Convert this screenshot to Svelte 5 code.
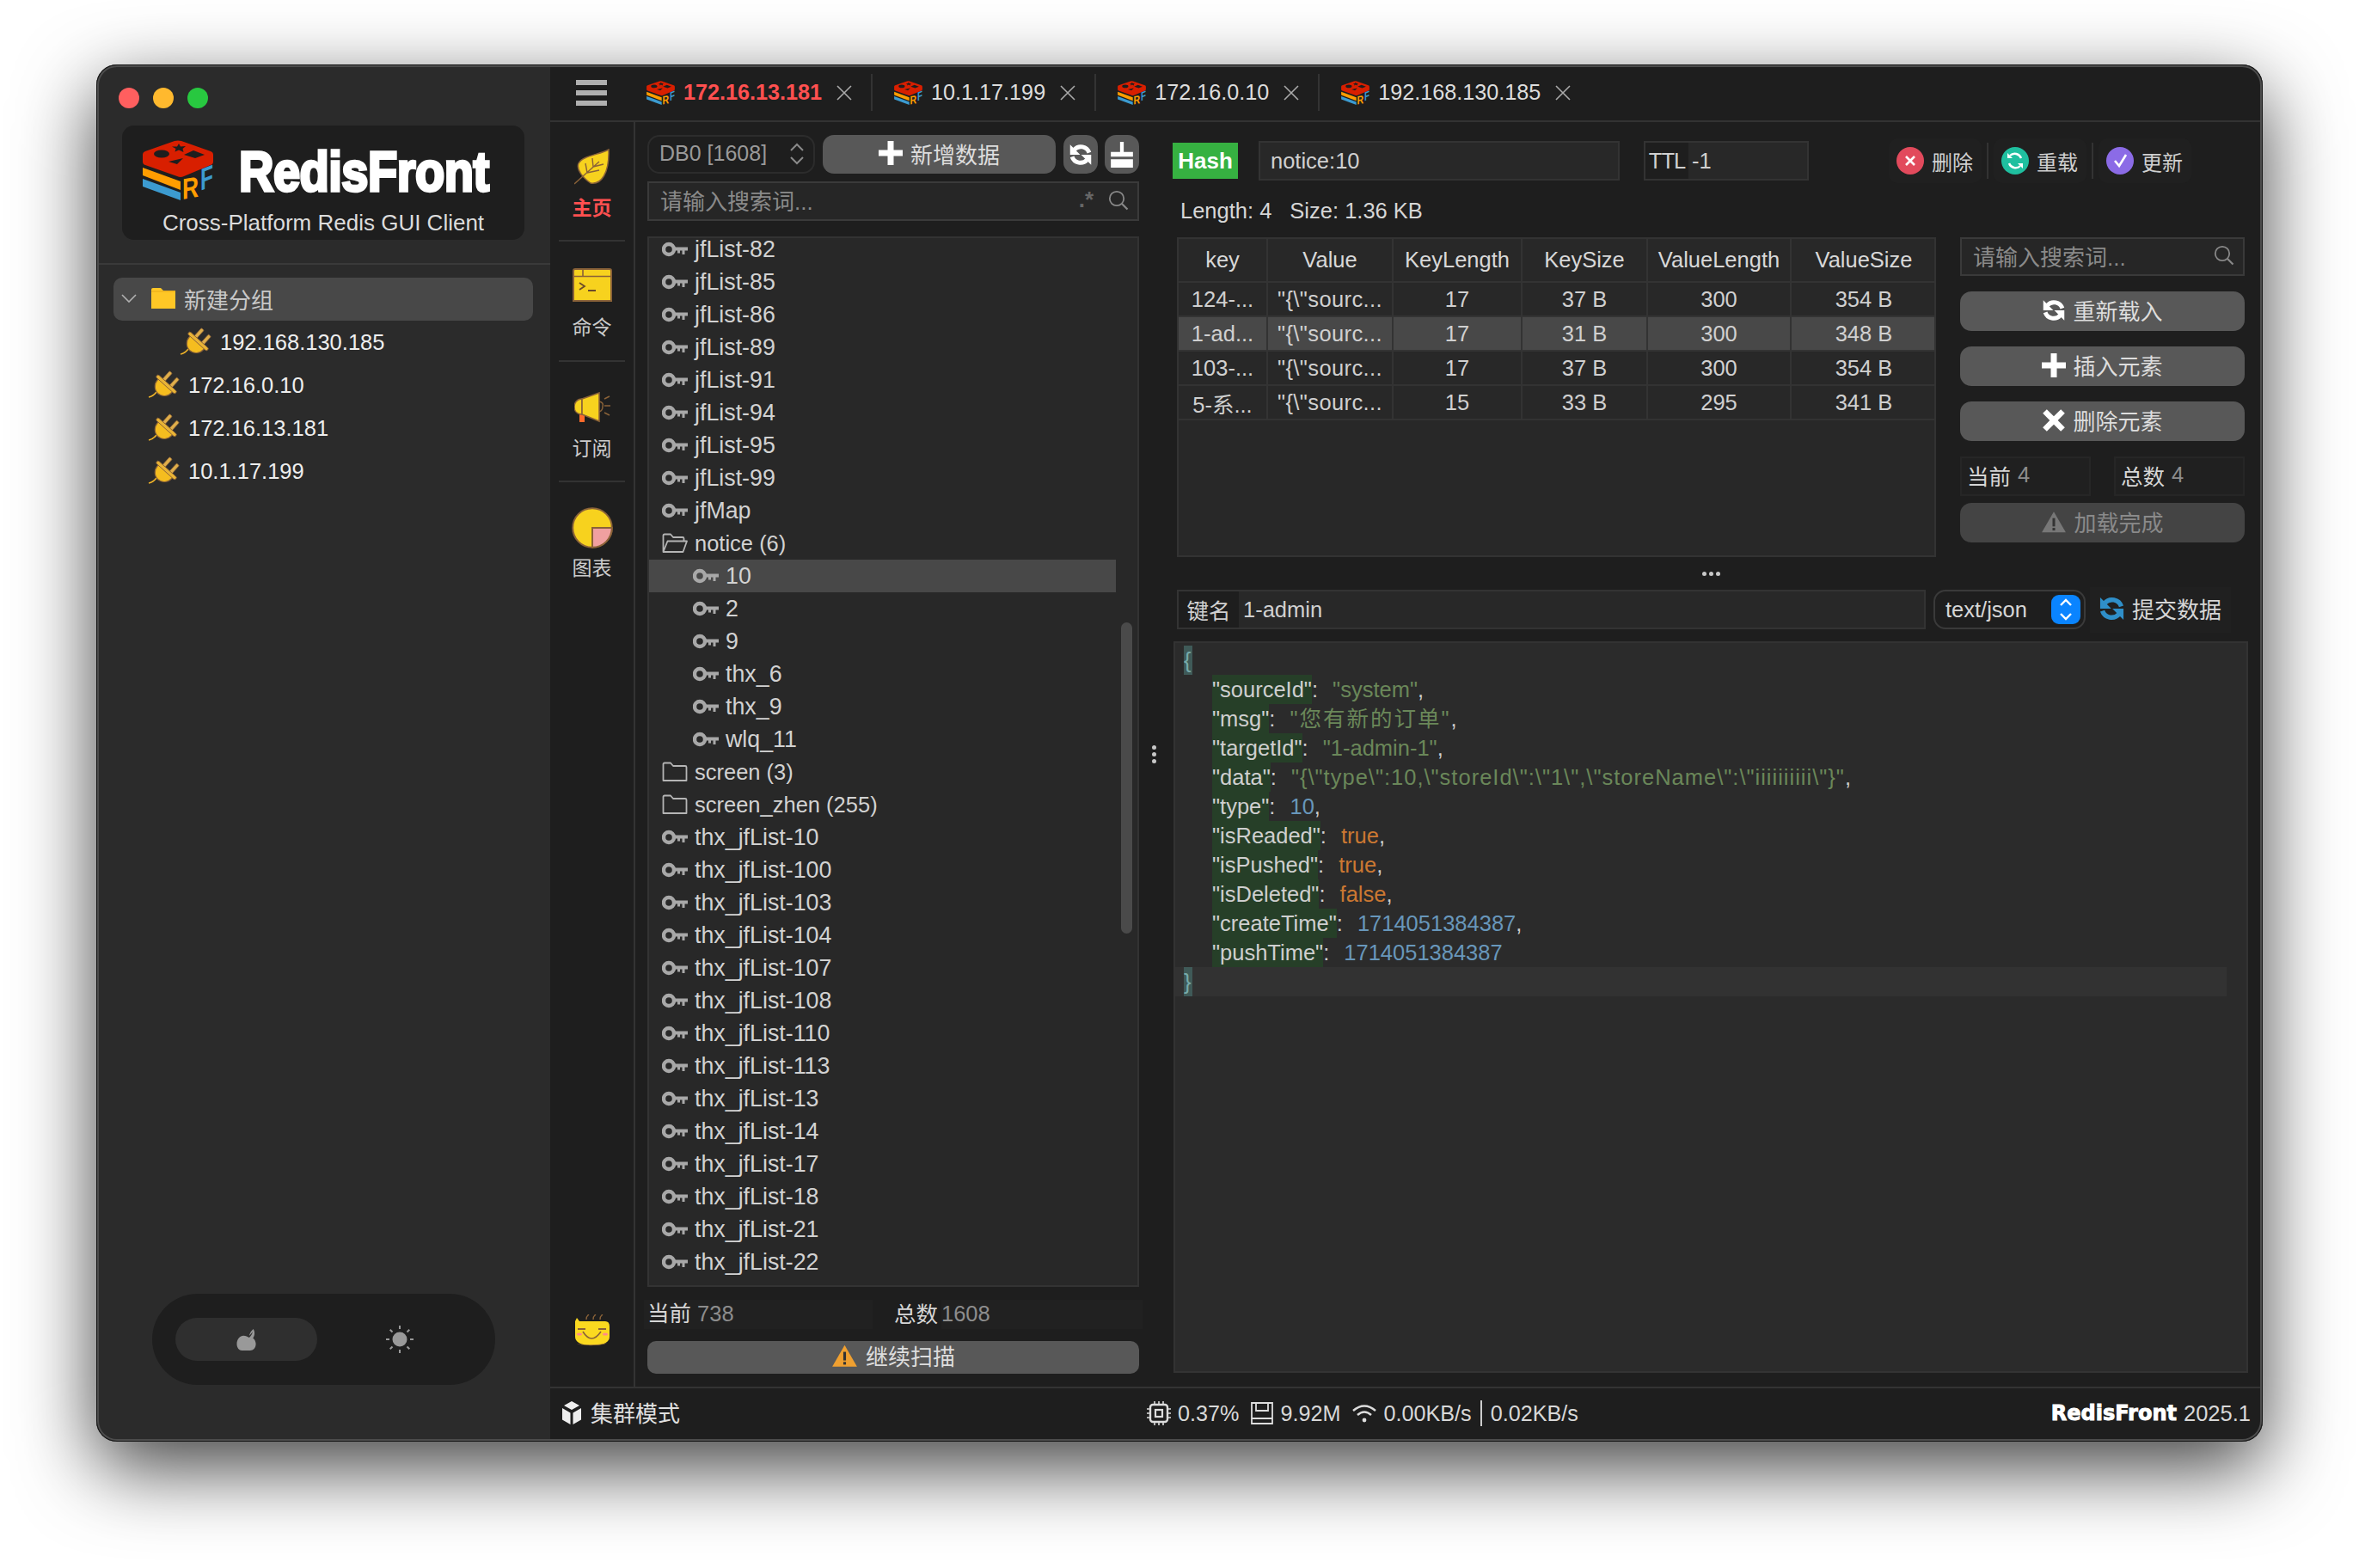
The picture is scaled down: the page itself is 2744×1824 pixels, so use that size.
<script>
  const tabs = [
    { name: '172.16.13.181', active: true },
    { name: '10.1.17.199' },
    { name: '172.16.0.10' },
    { name: '192.168.130.185' }
  ]
  const hosts = ['172.16.0.10', '172.16.13.181', '10.1.17.199']

  const keys = n => n.map(name => ({ name, kind: 'key' }))
  const sub = n => n.map(name => ({ name, kind: 'key', sub: true }))
  const tree = [
    ...keys(['jfList-82', 'jfList-85', 'jfList-86', 'jfList-89', 'jfList-91', 'jfList-94', 'jfList-95', 'jfList-99', 'jfMap']),
    { name: 'notice (6)', kind: 'open' },
    { name: '10', kind: 'key', sub: true, sel: true },
    ...sub(['2', '9', 'thx_6', 'thx_9', 'wlq_11']),
    { name: 'screen (3)', kind: 'closed' },
    { name: 'screen_zhen (255)', kind: 'closed' },
    ...keys(['thx_jfList-10', 'thx_jfList-100', 'thx_jfList-103', 'thx_jfList-104', 'thx_jfList-107', 'thx_jfList-108', 'thx_jfList-110', 'thx_jfList-113', 'thx_jfList-13', 'thx_jfList-14', 'thx_jfList-17', 'thx_jfList-18', 'thx_jfList-21', 'thx_jfList-22'])
  ]

  const cols = ['key', 'Value', 'KeyLength', 'KeySize', 'ValueLength', 'ValueSize']
  const rows = [
    ['124-...', '"{\\"sourc...', '17', '37 B', '300', '354 B'],
    ['1-ad...', '"{\\"sourc...', '17', '31 B', '300', '348 B', true],
    ['103-...', '"{\\"sourc...', '17', '37 B', '300', '354 B'],
    ['5-系...', '"{\\"sourc...', '15', '33 B', '295', '341 B']
  ]

  const json = [
    ['sourceId', 'str', '"system"', ','],
    ['msg', 'str wide', '"您有新的订单"', ','],
    ['targetId', 'str', '"1-admin-1"', ','],
    ['data', 'str wider', '"{\\"type\\":10,\\"storeId\\":\\"1\\",\\"storeName\\":\\"iiiiiiiiii\\"}"', ','],
    ['type', 'num', '10', ','],
    ['isReaded', 'bool', 'true', ','],
    ['isPushed', 'bool', 'true', ','],
    ['isDeleted', 'bool', 'false', ','],
    ['createTime', 'num', '1714051384387', ','],
    ['pushTime', 'num', '1714051384387', '']
  ]
</script>

{#snippet logo(cls)}
  <svg class={cls} viewBox="0 0 82 70">
    <path d="M37 1 Q41 0 45 1 L79 13 Q82 14 82 17 V25 Q82 28 79 29 L48 42 Q44 44 40 42 L3 29 Q0 28 0 25 V17 Q0 14 3 13 Z" fill="#d81f00"/>
    <ellipse cx="22" cy="16" rx="9" ry="4.5" fill="#1e1e1e"/>
    <path d="M42 4 L44 7.5 L50 7 L46.5 10 L47.5 14 L42 11.5 L37.5 13.5 L38.5 10 L34 7.5 L40 7.5 Z" fill="#1e1e1e"/>
    <path d="M59 12 L72 17 L61 21 L48 17 Z" fill="#1e1e1e"/>
    <path d="M47 21 L40 28 L30 25 Z" fill="#1e1e1e"/>
    <path d="M0 32 L44 48 V58 L0 41 Z" fill="#ff9d00"/>
    <path d="M0 45 L44 61 V70 L0 54 Z" fill="#3c9bd0"/>
    <text transform="translate(46 69) skewY(-10) scale(.78 1)" class="rf r">R</text>
    <text transform="translate(67 59) skewY(-22) scale(.72 1.05)" class="rf f">F</text>
  </svg>
{/snippet}

{#snippet plug()}
  <svg class="plug" viewBox="0 0 36 36">
    <path d="M-1 32 Q4 31 8 26" fill="none" stroke="#f0b429" stroke-width="1.6"/>
    <g transform="translate(19.5 17) rotate(42)">
      <rect x="-7.5" y="-14" width="4" height="13" rx="1" fill="#dfae4a" stroke="#8a6238" stroke-width=".8"/>
      <rect x="3.5" y="-14" width="4" height="13" rx="1" fill="#dfae4a" stroke="#8a6238" stroke-width=".8"/>
      <path d="M-11 1 H11 V3 A11 11.5 0 0 1 -11 3 Z" fill="#f5bd1f" stroke="#8a6238" stroke-width="1.2"/>
      <rect x="-15" y="-2" width="30" height="4" rx="2" fill="#e9b436" stroke="#8a6238" stroke-width=".9"/>
    </g>
  </svg>
{/snippet}

{#snippet key()}
  <svg class="tico" viewBox="0 0 30 18">
    <circle cx="8" cy="9" r="6" fill="none" stroke="#a8a8a8" stroke-width="4.4"/>
    <path d="M13 6.5 H30 V10.5 H26.5 V15 H23.5 V10.5 H21 V13.5 H18 V10.5 H13 Z" fill="#a8a8a8"/>
  </svg>
{/snippet}

{#snippet folder(open)}
  <svg class="tico folder" viewBox="0 0 30 24">
    {#if open}
      <path d="M1.5 22 V3 Q1.5 1.5 3 1.5 H10 L13 5 H24 Q25.5 5 25.5 6.5 V9 M1.5 22 L6.5 9.5 H29 L24.5 22 Z" fill="none" stroke="#b5b5b5" stroke-width="1.8" stroke-linejoin="round"/>
    {:else}
      <path d="M1.5 22 V3 Q1.5 1.5 3 1.5 H10 L13 5 H27 Q28.5 5 28.5 6.5 V22 Z" fill="none" stroke="#b5b5b5" stroke-width="1.8" stroke-linejoin="round"/>
    {/if}
  </svg>
{/snippet}

{#snippet sync(cls)}
  <svg class={cls} viewBox="0 0 24 24">
    <path d="M20.5 10 A8.8 8.8 0 0 0 5.6 7" fill="none" stroke="currentColor" stroke-width="4.2"/>
    <path d="M1.5 2 V12 H11.5 Z" fill="currentColor"/>
    <path d="M3.5 14 A8.8 8.8 0 0 0 18.4 17" fill="none" stroke="currentColor" stroke-width="4.2"/>
    <path d="M22.5 22 V12 H12.5 Z" fill="currentColor"/>
  </svg>
{/snippet}

{#snippet plus()}
  <svg class="bico" viewBox="0 0 24 24"><path d="M9 0 H15 V9 H24 V15 H15 V24 H9 V15 H0 V9 H9 Z" fill="currentColor"/></svg>
{/snippet}

{#snippet warn(cls)}
  <svg class={cls} viewBox="0 0 28 24">
    <path d="M14 1 L27 23.5 H1 Z" fill="currentColor"/>
    <rect x="12.6" y="8" width="2.8" height="9" fill="#333"/>
    <rect x="12.6" y="18.6" width="2.8" height="2.8" fill="#333"/>
  </svg>
{/snippet}

{#snippet lens()}
  <svg class="lens" viewBox="0 0 24 24">
    <circle cx="10" cy="10" r="8.2" fill="none" stroke="currentColor" stroke-width="1.8"/>
    <path d="M16 16 L22.5 22.5" stroke="currentColor" stroke-width="2.2"/>
  </svg>
{/snippet}

<div class="page">
  <div class="window">
    <aside class="side">
      <div class="lights"><i class="red"></i><i class="yellow"></i><i class="green"></i></div>
      <div class="brand">
        <div class="brand-top">
          {@render logo('brand-ico')}
          <span class="brand-name">RedisFront</span>
        </div>
        <div class="brand-sub">Cross-Platform Redis GUI Client</div>
      </div>
      <div class="side-line"></div>
      <div class="group">
        <svg class="chev" viewBox="0 0 18 12"><path d="M1 2 L9 10 L17 2" fill="none" stroke="#b0b0b0" stroke-width="1.6"/></svg>
        <svg class="gfolder" viewBox="0 0 28 24"><path d="M0 2 Q0 0 2 0 H11 L14 3 H28 V24 H0 Z" fill="#ffc726"/><path d="M0 4 H28" stroke="#e8a818" stroke-width="1"/></svg>
        <span>新建分组</span>
      </div>
      <div class="host nested">{@render plug()}<span>192.168.130.185</span></div>
      {#each hosts as h}
        <div class="host">{@render plug()}<span>{h}</span></div>
      {/each}
      <div class="mode">
        <div class="mode-on">
          <svg class="apple" viewBox="0 0 24 26"><path d="M15 8 C16 4 18 2 20 0 C22 3 22 8 19.5 11 C22 13 23 16 23 18 C23 23 20 26 16 26 H6 C3 26 0 23 0 18 C0 12 4 8 8 8 C11 8 13 9 15 10.5 C17 8 19 6 19 3 C18 5 16 7 15 8 Z" fill="#999"/></svg>
        </div>
        <div class="mode-off">
          <svg class="sun" viewBox="0 0 34 34">
            <circle cx="17" cy="17" r="8.5" fill="#999"/>
            <path d="M17 1 V5 M17 29 V33 M1 17 H5 M29 17 H33 M5.7 5.7 L8.5 8.5 M25.5 25.5 L28.3 28.3 M5.7 28.3 L8.5 25.5 M25.5 8.5 L28.3 5.7" stroke="#999" stroke-width="2"/>
          </svg>
        </div>
      </div>
    </aside>

    <main class="main">
      <header class="tabs">
        <div class="burger"><i></i><i></i><i></i></div>
        {#each tabs as t}
          <div class="tab" class:active={t.active}>
            {@render logo('tab-ico')}
            <span class="tab-name">{t.name}</span>
            <svg class="tab-x" viewBox="0 0 18 18"><path d="M1 1 L17 17 M17 1 L1 17" stroke="#aaa" stroke-width="1.6"/></svg>
          </div>
        {/each}
      </header>

      <div class="body">
        <nav class="rail">
          <div class="rail-item on">
            <svg class="r-leaf" viewBox="0 0 42 42">
              <path d="M40 1 C29 7 10 8 5 17 C2 24 10 34 19 40 C31 42 41 29 40 1 Z" fill="#f7d21e" stroke="#8a6238" stroke-width="1.5"/>
              <path d="M0 41 L29 15 M15 28 L13 17 M22 21 L21 11 M15 28 L29 25 M22 21 L34 18" fill="none" stroke="#8a6238" stroke-width="1.4"/>
            </svg>
            <span>主页</span>
          </div>
          <div class="rail-item">
            <svg class="r-term" viewBox="0 0 46 39">
              <path d="M1 38 V3 Q1 1 3 1 H43 Q45 1 45 3 V38 Z" fill="#f7d21e" stroke="#8a6238" stroke-width="2"/>
              <path d="M1 9.5 H45 M12 1 V9.5" stroke="#8a6238" stroke-width="1.6"/>
              <path d="M8 17 L14 21 L8 25 M18 26 H27" fill="none" stroke="#6b4a2a" stroke-width="1.8"/>
            </svg>
            <span>命令</span>
          </div>
          <div class="rail-item">
            <svg class="r-horn" viewBox="0 0 42 36">
              <path d="M6 24 H12 L12 35 H6 Z" fill="#ff6a2b"/>
              <path d="M9 8 C3 8 0 13 0 17 C0 22 3 26 9 26 Z" fill="#f7d21e" stroke="#8a6238" stroke-width="1.4"/>
              <path d="M9 8 L29 1 V34 L9 26 Z" fill="#f7d21e" stroke="#8a6238" stroke-width="1.6"/>
              <path d="M29 11 C33 12 34 14 33 17 C33 20 32 22 29 23 M35 8 L41 5 M35 16 H42 M35 24 L41 27" fill="none" stroke="#8a6238" stroke-width="1.5"/>
            </svg>
            <span>订阅</span>
          </div>
          <div class="rail-item">
            <svg class="r-pie" viewBox="0 0 48 48">
              <circle cx="24" cy="24" r="22.8" fill="#f7d21e" stroke="#8a6238" stroke-width="2"/>
              <path d="M24 24 H46.8 A22.8 22.8 0 0 1 24 46.8 Z" fill="#f0a0a0" stroke="#8a6238" stroke-width="2"/>
            </svg>
            <span>图表</span>
          </div>
          <svg class="r-face" viewBox="0 0 41 37">
            <path d="M1 8 L3 4 L6 8 H36 Q41 8 41 14 V26 C41 32 35 36 21 36 C7 36 1 32 1 26 Z" fill="#fbd920"/>
            <path d="M3 34 C8 36 32 36 38 33 C34 37 8 37 3 34 Z" fill="#8a6238"/>
            <path d="M14 6 Q14 2 17 0 M22 6 Q22 2 25 0 M30 6 Q30 2 33 0" fill="none" stroke="#8a6238" stroke-width="1.4"/>
            <path d="M4 17 H13 M28 17 H37" stroke="#8a6238" stroke-width="1.8"/>
            <path d="M10 20 Q20 36 31 20" fill="none" stroke="#8a6238" stroke-width="1.6"/>
            <ellipse cx="6" cy="23" rx="3" ry="1.5" fill="#ff8a8a"/><ellipse cx="36" cy="23" rx="3" ry="1.5" fill="#ff8a8a"/>
          </svg>
        </nav>

        <section class="keys">
          <div class="db-row">
            <div class="db">DB0 [1608]
              <svg class="updown" viewBox="0 0 18 26"><path d="M2 9 L9 2 L16 9 M2 17 L9 24 L16 17" fill="none" stroke="#8a8a8a" stroke-width="2"/></svg>
            </div>
            <button class="btn add">{@render plus()}新增数据</button>
            <button class="btn sq">{@render sync('bico big')}</button>
            <button class="btn sq">
              <svg class="bico big" viewBox="0 0 24 28"><path d="M10 0 H14 V11 H24 V16 H0 V11 H10 Z M0 19 H24 V28 H0 Z" fill="currentColor"/></svg>
            </button>
          </div>
          <div class="search">
            <span class="ph">请输入搜索词...</span>
            <span class="regex">.*</span>
            {@render lens()}
          </div>
          <div class="tree">
            <div class="tree-rows">
              {#each tree as n}
                <div class="node" class:sub={n.sub} class:sel={n.sel} class:dir={n.kind !== 'key'}>
                  {#if n.kind === 'key'}{@render key()}{:else}{@render folder(n.kind === 'open')}{/if}
                  <span>{n.name}</span>
                </div>
              {/each}
            </div>
            <div class="thumb"></div>
          </div>
          <div class="count">
            <div class="cnt-a">当前 <em>738</em></div>
            <div class="cnt-l">总数</div>
            <div class="cnt-b"><em>1608</em></div>
          </div>
          <button class="btn scan">{@render warn('warn')}继续扫描</button>
        </section>

        <div class="vsplit"><i></i><i></i><i></i></div>

        <section class="detail">
          <div class="toolbar">
            <span class="hash">Hash</span>
            <div class="field name">notice:10</div>
            <div class="field ttl"><b>TTL</b><span>-1</span></div>
            <div class="actions">
              <div class="act">
                <svg class="cir" viewBox="0 0 32 32"><circle cx="16" cy="16" r="16" fill="#e24a5c"/><path d="M11 11 L21 21 M21 11 L11 21" stroke="#fff" stroke-width="2.6"/></svg>
                删除
              </div>
              <i class="act-sep"></i>
              <div class="act">
                <svg class="cir" viewBox="0 0 32 32"><circle cx="16" cy="16" r="16" fill="#1fbf9f"/><path d="M23 13 A8 8 0 0 0 10 10 M9 19 A8 8 0 0 0 22 22" fill="none" stroke="#fff" stroke-width="2.4"/><path d="M7 7 V13 H13 Z M25 25 V19 H19 Z" fill="#fff"/></svg>
                重载
              </div>
              <i class="act-sep"></i>
              <div class="act">
                <svg class="cir" viewBox="0 0 32 32"><circle cx="16" cy="16" r="16" fill="#8b6be6"/><path d="M10 16 L15 22 L23 9" fill="none" stroke="#fff" stroke-width="2.6"/></svg>
                更新
              </div>
            </div>
          </div>

          <div class="meta"><span>Length: 4</span><span>Size: 1.36 KB</span></div>

          <div class="upper">
            <div class="tbl">
              <table>
                <thead><tr>{#each cols as c}<th>{c}</th>{/each}</tr></thead>
                <tbody>
                  {#each rows as r}
                    <tr class:cur={r[6]}>{#each r.slice(0, 6) as v}<td>{v}</td>{/each}</tr>
                  {/each}
                </tbody>
              </table>
            </div>
            <div class="ops">
              <div class="search small"><span class="ph">请输入搜索词...</span>{@render lens()}</div>
              <button class="btn op">{@render sync('bico')}重新载入</button>
              <button class="btn op">{@render plus()}插入元素</button>
              <button class="btn op">
                <svg class="bico" viewBox="0 0 24 24"><path d="M1 5 L5 1 L12 8 L19 1 L23 5 L16 12 L23 19 L19 23 L12 16 L5 23 L1 19 L8 12 Z" fill="currentColor"/></svg>
                删除元素
              </button>
              <div class="op-count">
                <div>当前 <em>4</em></div>
                <div>总数 <em>4</em></div>
              </div>
              <button class="btn op off">{@render warn('bico warn-off')}加载完成</button>
            </div>
          </div>

          <div class="hsplit"><i></i><i></i><i></i></div>

          <div class="keyrow">
            <div class="field kname"><b>键名</b><span>1-admin</span></div>
            <div class="ctype">text/json
              <span class="stepper"><svg viewBox="0 0 18 30"><path d="M3 10 L9 4 L15 10 M3 20 L9 26 L15 20" fill="none" stroke="#fff" stroke-width="2.4"/></svg></span>
            </div>
            <div class="submit">{@render sync('sub-ico')}提交数据</div>
          </div>

          <div class="editor">
            <div class="ln"><span class="br">{'{'}</span></div>
            {#each json as [k, type, v, tail]}
              <div class="ln prop"><span class="k">"{k}"</span>: <span class={type}>{v}</span>{tail}</div>
            {/each}
            <div class="ln now"><span class="br">{'}'}</span></div>
          </div>
        </section>
      </div>

      <footer class="status">
        <svg class="st-cube" viewBox="0 0 24 28"><path d="M12 0 L21 5 L12 10 L3 5 Z M1 8 L10.5 13.5 V27 L1 21.5 Z M23 8 L13.5 13.5 V27 L23 21.5 Z" fill="#eee"/></svg>
        <span class="st-mode">集群模式</span>
        <div class="stats">
          <svg class="st-ico" viewBox="0 0 28 28"><rect x="4" y="4" width="20" height="20" rx="3" fill="none" stroke="#ddd" stroke-width="2.4"/><rect x="10" y="10" width="8" height="8" fill="none" stroke="#ddd" stroke-width="2.2"/><path d="M9 0 V4 M14 0 V4 M19 0 V4 M9 24 V28 M14 24 V28 M19 24 V28 M0 9 H4 M0 14 H4 M0 19 H4 M24 9 H28 M24 14 H28 M24 19 H28" stroke="#ddd" stroke-width="1.6"/></svg>
          <span>0.37%</span>
          <svg class="st-ico disk" viewBox="0 0 26 26"><path d="M1 1 H25 V25 H1 Z M1 19 H25 M6 1 V10 H20 V1" fill="none" stroke="#ddd" stroke-width="1.8"/></svg>
          <span>9.92M</span>
          <svg class="st-ico wifi" viewBox="0 0 28 22"><path d="M1 8 Q14 -3 27 8 M6 13 Q14 6 22 13" fill="none" stroke="#ddd" stroke-width="2.4"/><circle cx="14" cy="19" r="2.4" fill="#ddd"/></svg>
          <span>0.00KB/s</span>
          <i class="st-sep"></i>
          <span>0.02KB/s</span>
        </div>
        <div class="ver"><b>RedisFront</b><span>2025.1</span></div>
      </footer>
    </main>
  </div>
</div>

<style>
  :global(body) { margin:0;background:#fff; }
  .page { width:2744px;height:1824px;box-sizing:border-box;padding:75px 112px 147px;overflow:hidden;font-family:"Liberation Sans","Noto Sans CJK SC",sans-serif;font-size:25.5px;color:#d6d6d6;background:#fff; }
  .window { position:relative;height:100%;display:flex;border-radius:24px;overflow:hidden;background:#2b2b2b;box-shadow:0 30px 90px rgba(0,0,0,.75); }
  .window::after { content:'';position:absolute;inset:0;border-radius:24px;pointer-events:none;box-shadow:inset 0 0 0 1px #141414,inset 0 0 0 3px #4c4c4c; }
  em { font-style:normal;color:#8d8d8d; }

  .side { width:528px;flex:none;display:flex;flex-direction:column;background:#2b2b2b; }
  .lights { display:flex;gap:16px;margin:27px 0 20px 26px; }
  .lights i { width:24px;height:24px;border-radius:50%; }
  .red { background:#ff5f5f; } .yellow { background:#ffb92e; } .green { background:#28c840; }
  .brand { width:468px;height:133px;box-sizing:border-box;margin-left:30px;padding:17px 0 0 24px;background:#1e1e1e;border-radius:14px; }
  .brand-top { display:flex;align-items:center;height:70px; }
  .brand-ico, .tab-ico { overflow:visible; }
  .brand-ico { width:82px;height:70px;flex:none; }
  .rf { font:bold 34px "Liberation Sans",sans-serif; }
  .rf.r { fill:#ff9d00; }
  .rf.f { fill:#3c9bd0; }
  .brand-name { display:inline-block;margin:3px 0 0 30px;font:bold 56px "Liberation Sans",sans-serif;color:#fff;-webkit-text-stroke:3px #fff;letter-spacing:-.5px;line-height:70px;transform:scaleY(1.15); }
  .brand-sub { margin:8px 0 0 -24px;text-align:center;font-size:26px;color:#dcdcdc;line-height:36px; }
  .side-line { height:2px;margin-top:27px;background:#3a3a3a; }
  .group { display:flex;align-items:center;width:488px;height:50px;margin:15px 0 0 20px;padding-bottom:2px;box-sizing:border-box;background:#484848;border-radius:10px;color:#c8c8c8;font-size:26px; }
  .chev { width:18px;height:12px;margin-left:9px; }
  .gfolder { width:28px;height:24px;margin:0 10px 0 17px; }
  .host { display:flex;align-items:center;height:50px;padding-left:62px;color:#eee; }
  .host.nested { padding-left:99px; }
  .plug { width:36px;height:36px;margin-right:9px;flex:none;overflow:visible; }
  .mode { display:flex;align-items:center;box-sizing:border-box;width:399px;height:106px;margin:auto 0 66px 65px;padding-left:27px;background:#1e1e1e;border-radius:53px; }
  .mode-on { display:flex;align-items:center;justify-content:center;width:165px;height:50px;background:#2f2f2f;border-radius:25px; }
  .apple { width:30px;height:25px; }
  .mode-off { display:flex;justify-content:center;width:192px; }
  .sun { width:34px;height:34px; }

  .main { flex:1;min-width:0;display:flex;flex-direction:column;background:#1e1e1e; }
  .tabs { display:flex;align-items:center;height:65px;flex:none;box-sizing:content-box;border-bottom:2px solid #333; }
  .burger { display:flex;flex-direction:column;justify-content:space-between;width:36px;height:30px;margin:0 21px 0 30px; }
  .burger i { height:6px;background:#b0b0b0; }
  .tab { display:flex;align-items:center;height:43px;padding:0 22px 0 25px;border-right:2px solid #333; }
  .tab:last-child { border-right:none; }
  .tab-ico { width:33px;height:28px;flex:none;margin-right:10px; }
  .tab-name { font-size:25.2px;color:#ddd; }
  .tab.active .tab-name { color:#ff5050;font-weight:bold; }
  .tab-x { width:18px;height:18px;margin-left:17px; }

  .body { flex:1;min-height:0;display:flex; }
  .rail { width:97px;flex:none;display:flex;flex-direction:column;box-sizing:content-box;border-right:2px solid #333; }
  .rail-item { display:flex;flex-direction:column;align-items:center;height:140px;margin:0 10px;box-sizing:border-box;border-bottom:2px solid #333;color:#ccc;font-size:23px;line-height:26px; }
  .rail-item:first-child { height:139px; }
  .rail-item:nth-child(4) { border-bottom:none; }
  .rail-item span { margin-top:17px; }
  .rail-item.on span { color:#ff5050;font-weight:bold;margin-top:14px; }
  .r-leaf { width:42px;height:42px;margin-top:31px; }
  .r-term { width:46px;height:39px;margin-top:31px; }
  .r-horn { width:42px;height:36px;margin-top:35px; }
  .r-pie { width:48px;height:48px;margin-top:29px; }
  .rail-item:nth-child(3) span { margin-top:17px; }
  .rail-item:nth-child(4) span { margin-top:10px; }
  .r-face { width:41px;height:37px;margin:auto 0 47px 28px; }

  .keys { width:572px;flex:none;display:flex;flex-direction:column;margin-left:14px;padding:15px 0 15px;box-sizing:border-box; }
  .db-row { display:flex;gap:9px;height:45px;flex:none; }
  .db { width:195px;flex:none;display:flex;align-items:center;justify-content:space-between;box-sizing:border-box;padding:0 10px 2px 12px;border:2px solid #2c2c2c;border-radius:14px;color:#999;font-size:25px; }
  .updown { width:18px;height:26px; }
  .btn { display:flex;align-items:center;justify-content:center;gap:8px;border:none;background:#585858;color:#ddd;font-family:inherit;font-size:26px;padding:0 0 3px;border-radius:13px; }
  .add { flex:1;gap:9px; }
  .sq { width:40px;flex:none;color:#fff;padding:0; }
  .sq:last-child { margin-left:-1px; }
  .bico { width:28px;height:28px;color:#fff;flex:none; }
  .bico.big { width:28px;height:30px; }
  .search { display:flex;align-items:center;flex:none;box-sizing:border-box;height:46px;margin-top:9px;padding:0 10px 3px 13px;background:#262626;border:2px solid #3a3a3a;color:#8a8a8a;font-size:26px; }
  .ph { flex:1; }
  .regex { color:#666;font-weight:bold;margin-right:17px;font-size:26px; }
  .lens { width:24px;height:24px;color:#888; }
  .tree { position:relative;flex:1;min-height:0;margin-top:18px;background:#282828;border:2px solid #333;overflow:hidden; }
  .tree-rows { margin-top:-6px; }
  .node { display:flex;align-items:center;height:38px;padding-left:15px;color:#d2d2d2;font-size:26.8px; }
  .node.dir { font-size:25.5px; }
  .node.sub { padding-left:51px;margin-right:25px; }
  .node.sel { background:#484848; }
  .tico { width:30px;height:18px;margin-right:8px;flex:none; }
  .tico.folder { height:24px; }
  .thumb { position:absolute;left:549px;top:447px;width:13px;height:362px;border-radius:7px;background:#4a4a4a; }
  .count { display:flex;align-items:center;height:34px;margin:15px -4px 0 -4px;flex:none;font-size:25.5px;color:#d6d6d6; }
  .cnt-a { width:266px;height:34px;line-height:32px;box-sizing:border-box;padding-left:4px;background:#212121; }
  .cnt-l { margin-left:25px;width:55px;line-height:32px; }
  .cnt-b { flex:1;height:34px;line-height:32px;background:#212121; }
  .scan { height:38px;flex:none;margin-top:14px;border-radius:10px;gap:9px;padding-bottom:5px; }
  .warn { width:31px;height:28px;color:#f0a030; }

  .vsplit { width:35px;flex:none;display:flex;flex-direction:column;align-items:center;justify-content:center;gap:3px; }
  .vsplit i, .hsplit i { width:5px;height:5px;border-radius:50%;background:#c8c8c8; }

  .detail { flex:1;min-width:0;display:flex;flex-direction:column;padding-left:4px; }
  .toolbar { display:flex;align-items:center;height:52px;margin-top:19px;flex:none; }
  .hash { display:flex;align-items:center;justify-content:center;width:76px;height:42px;background:#36b141;color:#fff;font-weight:bold;font-size:26px; }
  .field { display:flex;align-items:center;box-sizing:border-box;height:46px;background:#282828;border:2px solid #333;color:#d0d0d0; }
  .name { width:420px;margin-left:24px;padding-left:12px; }
  .ttl { width:192px;margin-left:28px; }
  .field b { display:flex;align-items:center;justify-content:center;height:100%;background:#1e1e1e;font-weight:normal;flex:none; }
  .ttl b { width:50px;letter-spacing:-1px; }
  .ttl span { margin-left:4px; }
  .actions { display:flex;align-items:center;margin-left:93px;height:52px; }
  .act { display:flex;align-items:center;gap:9px;height:52px;padding:0 10px 0 9px;background:#202020;border-radius:10px;font-size:24px;color:#d0d0d0; }
  .act-sep { width:2px;height:42px;margin:0 6px;background:#333; }
  .cir { width:32px;height:32px; }
  .meta { display:flex;gap:21px;height:30px;line-height:30px;margin:17px 0 0 9px;flex:none;color:#d6d6d6; }
  .upper { display:flex;gap:28px;height:372px;margin:16px 0 0 5px;flex:none; }
  .tbl { width:883px;flex:none;box-sizing:border-box;background:#282828;border:2px solid #333;overflow:hidden; }
  table { width:883px;margin:-2px 0 0 -2px;border-collapse:collapse;table-layout:fixed;font-size:25.5px; }
  th, td { box-sizing:border-box;border:2px solid #333;text-align:center;padding:0;font-weight:normal;white-space:nowrap;overflow:hidden; }
  th { height:51px;color:#d8d8d8; }
  th:nth-child(1) { width:104px; } th:nth-child(2) { width:146px; } th:nth-child(3) { width:150px; }
  th:nth-child(4) { width:146px; } th:nth-child(5) { width:167px; } th:nth-child(6) { width:170px; }
  td { height:40px;color:#d0d0d0; }
  td:nth-child(2) { letter-spacing:.4px; }
  tr.cur td { background:#484848; }
  .ops { width:331px;flex:none;display:flex;flex-direction:column;gap:18px; }
  .search.small { margin:0;height:45px;flex:none; }
  .op { height:46px;flex:none;border-radius:13px; }
  .op-count { display:flex;justify-content:space-between;flex:none;height:46px; }
  .op-count div { display:flex;align-items:center;gap:8px;width:152px;box-sizing:border-box;padding:0 0 3px 6px;border:2px solid #262626;background:#202020; }
  .op-count + .op { margin-top:-10px; }
  .off { background:#444;color:#8a8a8a; }
  .warn-off { width:30px;color:#777; }

  .hsplit { display:flex;justify-content:center;align-items:center;gap:3px;height:38px;flex:none;margin-left:-1px;width:1254px; }
  .keyrow { display:flex;align-items:center;height:46px;flex:none;margin-left:5px; }
  .kname { width:871px; }
  .kname b { width:70px;padding-bottom:2px;box-sizing:border-box; }
  .kname span { margin-left:5px; }
  .ctype { display:flex;align-items:center;justify-content:space-between;box-sizing:border-box;width:177px;height:46px;margin-left:9px;padding:0 4px 0 12px;border:2px solid #3a3a3a;border-radius:14px; }
  .stepper { display:flex;align-items:center;justify-content:center;width:34px;height:34px;background:#0a84ff;border-radius:9px; }
  .stepper svg { width:18px;height:30px; }
  .submit { display:flex;align-items:center;gap:8px;box-sizing:border-box;width:164px;height:53px;margin-left:5px;padding:0 0 3px 10px;background:#202020;font-size:26px;color:#d6d6d6; }
  .sub-ico { width:31px;height:34px;color:#2f8fc9;flex:none; }
  .editor { height:851px;width:1250px;margin:14px 0 0 1px;box-sizing:border-box;padding:3px 23px 0 0;flex:none;background:#2b2b2b;border:2px solid #333; }
  .ln { height:34px;line-height:34px;padding-left:10px;color:#cfcfcf;white-space:pre; }
  .ln.prop { padding-left:43px; }
  .ln.now { background:#323232;padding-left:10px; }
  .br { display:inline-block;width:10px;height:34px;background:#3f5a58;color:#7aa;overflow:hidden; }
  .k { display:inline-block;height:34px;background:#263f28; }
  .str, .num, .bool { margin-left:10px; }
  .str { color:#6a8759; }
  .num { color:#6897bb; }
  .bool { color:#cc7832; }
  .wide { letter-spacing:2px; }
  .wider { letter-spacing:1px; }

  .status { display:flex;align-items:center;flex:none;box-sizing:border-box;height:64px;border-top:2px solid #333;padding:0 14px 4px 13px;color:#e0e0e0;font-size:26px; }
  .st-cube { width:24px;height:28px;margin-right:10px; }
  .st-mode { padding-bottom:4px; }
  .stats { display:flex;align-items:center;margin-left:543px;font-size:25.2px;color:#d8d8d8; }
  .st-ico { width:28px;height:28px;margin-right:8px; }
  .stats span + .st-ico { margin-left:14px; }
  .disk { width:26px;height:26px; }
  .wifi { height:22px; }
  .st-sep { width:2px;height:30px;margin:0 10px;background:#ccc; }
  .ver { display:flex;align-items:center;gap:8px;margin-left:auto; }
  .ver b { font:bold 24px "DejaVu Sans",sans-serif;color:#fff;-webkit-text-stroke:.9px #fff; }
  .ver span { font-size:25.5px;color:#d8d8d8; }
</style>
